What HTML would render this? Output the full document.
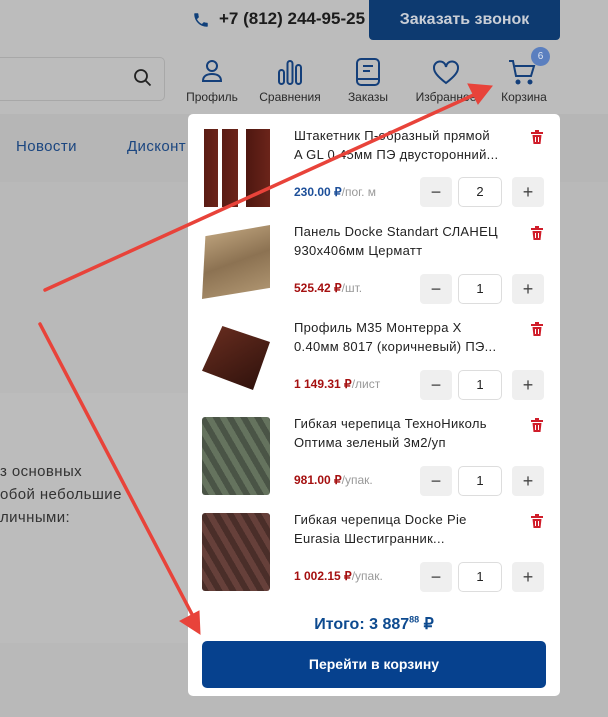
<!DOCTYPE html><html><head><meta charset="utf-8"><style>
*{box-sizing:border-box;margin:0;padding:0}
body{width:608px;height:717px;overflow:hidden;background:#b9b9b9;font-family:"Liberation Sans",sans-serif;position:relative}
.abs{position:absolute}
.hdr{left:0;top:0;width:608px;height:114px;background:#bcbcbc}
.nav{left:0;top:114px;width:608px;height:68px;background:#b6b6b6}
.cont{left:0;top:393px;width:188px;height:250px;background:#bcbcbc}
.lbl{font-size:12px;color:#2a2a2a;text-align:center;width:80px}
.pop{left:188px;top:114px;width:372px;height:582px;background:#fff;border-radius:5px}
.img{left:14px;width:68px;height:78px}
.ttl{left:106px;font-size:13px;line-height:19px;color:#222;white-space:nowrap;letter-spacing:0.3px}
.pr{left:106px;font-size:12px;font-weight:bold}
.pr span{color:#999;font-weight:normal}
.b{width:32px;height:30px;background:#efefef;border-radius:4px;text-align:center;line-height:30px;font-size:18px;color:#444}
.q{width:44px;height:30px;border:1px solid #ddd;border-radius:5px;text-align:center;line-height:28px;font-size:13px;color:#222}
</style></head><body>
<div class="abs hdr"></div><div class="abs nav"></div><div class="abs cont"></div>
<svg class="abs" style="left:192px;top:11px" width="18" height="18" viewBox="0 0 24 24"><path fill="#10407a" d="M6.6 10.8c1.4 2.8 3.8 5.1 6.6 6.6l2.2-2.2c.3-.3.7-.4 1-.2 1.1.4 2.3.6 3.6.6.6 0 1 .4 1 1V20c0 .6-.4 1-1 1C10.6 21 3 13.4 3 4c0-.6.4-1 1-1h3.5c.6 0 1 .4 1 1 0 1.3.2 2.5.6 3.6.1.3 0 .7-.2 1z"/></svg>
<div class="abs" style="left:219px;top:9px;font-size:17px;font-weight:bold;color:#1c1c1c">+7 (812) 244-95-25</div>
<div class="abs" style="left:369px;top:0;width:191px;height:40px;background:#0d3a70;border-radius:0 0 4px 4px;color:#c9ced6;font-weight:bold;font-size:16px;text-align:center;line-height:40px">Заказать звонок</div>
<div class="abs" style="left:-5px;top:57px;width:170px;height:44px;border:1px solid #a8a8a8;border-radius:5px"></div>
<svg class="abs" style="left:133px;top:68px" width="20" height="20" viewBox="0 0 20 20"><circle cx="8" cy="8" r="6" fill="none" stroke="#222" stroke-width="1.8"/><path d="M12.5 12.5l5 5" stroke="#222" stroke-width="1.8"/></svg>
<svg class="abs" style="left:198px;top:58px" width="28" height="28" viewBox="0 0 28 28" fill="none" stroke="#143f7a" stroke-width="2"><circle cx="14" cy="8" r="5"/><path d="M5 23c0-5 4-7 9-7s9 2 9 7z"/></svg>
<svg class="abs" style="left:276px;top:58px" width="28" height="28" viewBox="0 0 28 28" fill="none" stroke="#143f7a" stroke-width="2"><rect x="3" y="12" width="5" height="14" rx="2.5"/><rect x="11.5" y="3" width="5" height="23" rx="2.5"/><rect x="20" y="7" width="5" height="19" rx="2.5"/></svg>
<svg class="abs" style="left:354px;top:57px" width="28" height="30" viewBox="0 0 28 30" fill="none" stroke="#143f7a" stroke-width="2"><rect x="3" y="2" width="22" height="26" rx="4"/><path d="M9 9h10M9 14h7M3 22h22"/></svg>
<svg class="abs" style="left:432px;top:60px" width="28" height="26" viewBox="0 0 28 26" fill="none" stroke="#143f7a" stroke-width="2"><path d="M14 23C5 16 2 12 2 8a6 6 0 0 1 12-1 6 6 0 0 1 12 1c0 4-3 8-12 15z"/></svg>
<svg class="abs" style="left:507px;top:58px" width="30" height="28" viewBox="0 0 30 28" fill="none" stroke="#143f7a" stroke-width="2"><path d="M2 3h4l3 15h15l3-10H8"/><circle cx="11" cy="24" r="1.5" fill="#143f7a"/><circle cx="23" cy="24" r="1.5" fill="#143f7a"/></svg>
<div class="abs" style="left:531px;top:47px;width:19px;height:19px;border-radius:50%;background:#5b7fbf;color:#dfe6f2;font-size:10px;text-align:center;line-height:19px">6</div>
<div class="abs lbl" style="left:172px;top:90px">Профиль</div>
<div class="abs lbl" style="left:250px;top:90px">Сравнения</div>
<div class="abs lbl" style="left:328px;top:90px">Заказы</div>
<div class="abs lbl" style="left:406px;top:90px">Избранное</div>
<div class="abs lbl" style="left:484px;top:90px">Корзина</div>
<div class="abs" style="left:16px;top:138px;font-size:15px;color:#1b4680;letter-spacing:0.4px">Новости</div>
<div class="abs" style="left:127px;top:138px;font-size:15px;color:#1b4680;letter-spacing:0.4px">Дисконт</div>
<div class="abs" style="left:0;top:460px;font-size:15px;line-height:23px;color:#333;letter-spacing:0.4px">з основных<br>обой небольшие<br>личными:</div>

<div class="abs pop">
<div class="abs img" style="top:15px;background:linear-gradient(90deg,#fff 0,#fff 2px,#5a1c14 2px,#6b241a 16px,#fff 16px,#fff 20px,#5a1c14 20px,#6b241a 36px,#fff 36px,#fff 44px,#4e1710 44px,#6b241a 68px)"></div>
<div class="abs ttl" style="top:12px">Штакетник П-образный прямой<br>A GL 0.45мм ПЭ двусторонний...</div>
<div class="abs pr" style="top:71px;color:#1d4f99">230.00 ₽<span>/пог. м</span></div>
<div class="abs img" style="top:111px;height:74px;background:linear-gradient(160deg,#c7ac85,#8c7252 50%,#b59b76);clip-path:polygon(5% 15%,100% 0,100% 85%,0 100%)"></div>
<div class="abs ttl" style="top:108px">Панель Docke Standart СЛАНЕЦ<br>930х406мм Церматт</div>
<div class="abs pr" style="top:167px;color:#a51010">525.42 ₽<span>/шт.</span></div>
<div class="abs img" style="top:212px;height:64px;background:linear-gradient(150deg,#6a2e20,#2c100b);clip-path:polygon(30% 0,100% 25%,75% 100%,0 70%)"></div>
<div class="abs ttl" style="top:204px">Профиль М35 Монтерра Х<br>0.40мм 8017 (коричневый) ПЭ...</div>
<div class="abs pr" style="top:263px;color:#a51010">1 149.31 ₽<span>/лист</span></div>
<div class="abs img" style="top:303px;height:78px;border-radius:3px;background:repeating-linear-gradient(60deg,#4a5446 0 6px,#65735e 6px 12px)"></div>
<div class="abs ttl" style="top:300px">Гибкая черепица ТехноНиколь<br>Оптима зеленый 3м2/уп</div>
<div class="abs pr" style="top:359px;color:#a51010">981.00 ₽<span>/упак.</span></div>
<div class="abs img" style="top:399px;height:78px;border-radius:3px;background:repeating-linear-gradient(60deg,#4a2e29 0 6px,#66403a 6px 12px)"></div>
<div class="abs ttl" style="top:396px">Гибкая черепица Docke Pie<br>Eurasia Шестигранник...</div>
<div class="abs pr" style="top:455px;color:#a51010">1 002.15 ₽<span>/упак.</span></div>
</div>
<div class="abs" style="left:188px;top:614px;width:372px;text-align:center;font-size:16px;font-weight:bold;color:#0d4a8f">Итого: 3 887<sup style="font-size:9px">88</sup> ₽</div>
<div class="abs" style="left:202px;top:641px;width:344px;height:47px;background:#06418e;border-radius:5px;color:#fff;font-weight:bold;font-size:14px;text-align:center;line-height:47px">Перейти в корзину</div>
<svg class="abs" style="left:0;top:0" width="608" height="717">
<defs><g id="t"><rect x="0" y="2" width="12" height="2" fill="#d01d2a"/><rect x="4" y="0" width="4" height="2" fill="#d01d2a"/><path d="M1.5 5h9l-1 9h-7z" fill="#d01d2a"/><path d="M4.5 7v5M7.5 7v5" stroke="#fff" stroke-width="1"/></g></defs>
<use href="#t" x="531" y="130"/><use href="#t" x="531" y="226"/><use href="#t" x="531" y="322"/><use href="#t" x="531" y="418"/><use href="#t" x="531" y="514"/>
<g stroke="#e8433a" stroke-width="3.5" stroke-linecap="round" fill="#e8433a"><line x1="45" y1="290" x2="478" y2="93"/><path d="M492 86l-24-2 10 20z" stroke-width="1"/><line x1="40" y1="324" x2="195" y2="620"/><path d="M200 634l-20-13 19-10z" stroke-width="1"/></g>
</svg>
<div style="position:absolute;left:0;top:0">
<div class="abs b" style="left:420px;top:177px">−</div><div class="abs q" style="left:458px;top:177px">2</div><div class="abs b" style="left:512px;top:177px">+</div>
<div class="abs b" style="left:420px;top:274px">−</div><div class="abs q" style="left:458px;top:274px">1</div><div class="abs b" style="left:512px;top:274px">+</div>
<div class="abs b" style="left:420px;top:370px">−</div><div class="abs q" style="left:458px;top:370px">1</div><div class="abs b" style="left:512px;top:370px">+</div>
<div class="abs b" style="left:420px;top:466px">−</div><div class="abs q" style="left:458px;top:466px">1</div><div class="abs b" style="left:512px;top:466px">+</div>
<div class="abs b" style="left:420px;top:562px">−</div><div class="abs q" style="left:458px;top:562px">1</div><div class="abs b" style="left:512px;top:562px">+</div>
</div>
</body></html>
